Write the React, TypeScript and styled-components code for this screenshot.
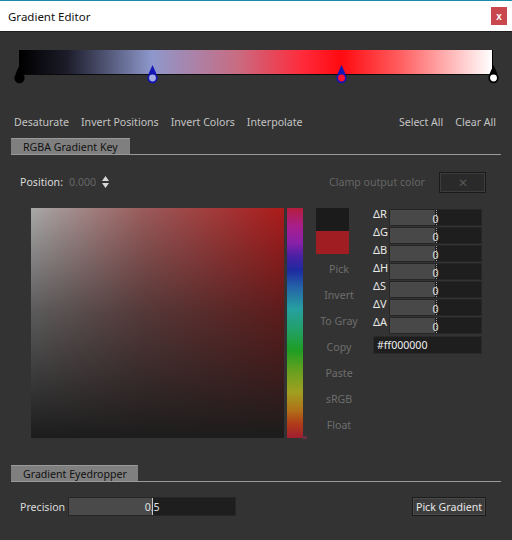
import styled, { createGlobalStyle } from "styled-components";

const GlobalStyle = createGlobalStyle`
  html, body {
    margin: 0;
    padding: 0;
    background: #333333;
  }
  * {
    box-sizing: border-box;
  }
`;

type Stop = { pos: number; color: string; outline: string; tip: string };

const stops: Stop[] = [
  { pos: 0, color: "#000000", outline: "#000000", tip: "#000000" },
  { pos: 28.1, color: "#a4abe0", outline: "#1515b8", tip: "#1515b8" },
  { pos: 68.1, color: "#ff1030", outline: "#1515b8", tip: "#1515b8" },
  { pos: 100, color: "#ffffff", outline: "#000000", tip: "#000000" },
];

const deltas = ["ΔR", "ΔG", "ΔB", "ΔH", "ΔS", "ΔV", "ΔA"];
const actions = ["Pick", "Invert", "To Gray", "Copy", "Paste", "sRGB", "Float"];

const Window = styled.div`
  width: 512px;
  height: 540px;
  background: #333333;
  font-family: "Noto Sans", "Open Sans", sans-serif;
  font-size: 10.6px;
  color: #c8c8c8;
  display: flex;
  flex-direction: column;
  overflow: hidden;
`;

const TitleBar = styled.div`
  height: 32px;
  flex-shrink: 0;
  background: #ffffff;
  border-top: 1px solid #1a8cab;
  border-bottom: 1px solid #1e1e1e;
  display: flex;
  align-items: center;
  justify-content: space-between;
  padding: 0 5px 0 8px;
  color: #111;
  font-size: 11.5px;
`;

const CloseButton = styled.div`
  width: 16px;
  height: 18px;
  background: #c8484e;
  color: #fff;
  font-size: 10px;
  font-weight: bold;
  display: flex;
  align-items: center;
  justify-content: center;
  font-family: "Liberation Sans", sans-serif;
`;

const Body = styled.div`
  flex: 1;
  padding: 0 11px;
  display: flex;
  flex-direction: column;
`;

const GradientArea = styled.div`
  position: relative;
  margin: 18px 8px 0 8px;
  height: 34px;
`;

const GradientBar = styled.div`
  height: 25px;
  border-bottom: 1px solid #0a0a0a;
  border-left: 1px solid #000;
  border-right: 1px solid #000;
  background: linear-gradient(
    to right,
    #000000 0%,
    #1c1c2a 10%,
    #8e98cc 28%,
    #c86c82 46%,
    #ff2a3a 60%,
    #ff0a10 68%,
    #ff5a5c 80%,
    #ffffff 100%
  );
`;

const Marker = styled.svg`
  position: absolute;
  top: 14px;
  width: 13px;
  height: 19px;
  margin-left: -6.5px;
  overflow: visible;
`;

const Toolbar = styled.div`
  margin-top: 30px;
  display: flex;
  justify-content: space-between;
  padding: 0 5px 0 3px;
  height: 16px;
  align-items: center;
`;

const ToolGroup = styled.div`
  display: flex;
  gap: 12px;
`;

const ToolLink = styled.span`
  color: #c4c4c4;
  white-space: nowrap;
`;

const TabHeader = styled.div<{ $top: number }>`
  margin-top: ${(p) => p.$top}px;
  border-bottom: 1px solid #9a9a9a;
  display: flex;
`;

const Tab = styled.div<{ $width: number }>`
  width: ${(p) => p.$width}px;
  height: 16px;
  background: #7f7f7f;
  color: #111;
  padding-left: 12px;
  display: flex;
  align-items: center;
  border-top: 1px solid #9a9a9a;
`;

const PositionRow = styled.div`
  margin-top: 16px;
  height: 22px;
  display: flex;
  align-items: center;
  padding: 0 15px 0 9px;
`;

const Label = styled.span<{ $dim?: boolean }>`
  color: ${(p) => (p.$dim ? "#666666" : "#dcdcdc")};
  white-space: nowrap;
`;

const Spinner = styled.svg`
  margin-left: 6px;
  width: 7px;
  height: 12px;
`;

const Spacer = styled.div`
  flex: 1;
`;

const ClampButton = styled.div`
  margin-left: 14px;
  width: 47px;
  height: 21px;
  background: #2a2a2a;
  border: 1px solid #1a1a1a;
  box-shadow: inset 0 0 0 1px #3c3c3c;
  display: flex;
  align-items: center;
  justify-content: center;
  color: #555;
  font-size: 12px;
`;

const PickerRow = styled.div`
  margin-top: 15px;
  display: flex;
  padding-left: 20px;
`;

const SVSquare = styled.div`
  width: 253px;
  height: 230px;
  background: linear-gradient(
      to bottom,
      rgba(28, 28, 28, 0) 0%,
      rgba(28, 28, 28, 0.55) 45%,
      rgba(28, 28, 28, 1) 100%
    ),
    linear-gradient(to right, #a8a8a8 0%, #9a5a5a 45%, #ac1a1a 100%);
`;

const HueBar = styled.div`
  margin-left: 3px;
  width: 16px;
  height: 230px;
  position: relative;
  background: linear-gradient(
    to bottom,
    #b41e3c 0%,
    #a81e8c 8%,
    #8a20a8 15%,
    #4a20a4 21%,
    #1e2aa0 27%,
    #2460a8 34%,
    #26a0a0 44%,
    #22a060 54%,
    #1e9e22 62%,
    #62a020 70%,
    #a0a020 80%,
    #b07018 88%,
    #b03a1a 94%,
    #a01e30 100%
  );
`;

const HueMark = styled.div`
  position: absolute;
  right: -4px;
  bottom: -1px;
  width: 5px;
  height: 3px;
  background: #6a3040;
`;

const SideColumn = styled.div`
  margin-left: 13px;
  width: 46px;
  display: flex;
  flex-direction: column;
  align-items: flex-start;
`;

const Swatch = styled.div<{ $color: string }>`
  width: 33px;
  height: 23px;
  background: ${(p) => p.$color};
`;

const ActionList = styled.div`
  margin-top: 2px;
  width: 46px;
  display: flex;
  flex-direction: column;
`;

const ActionItem = styled.div`
  height: 26px;
  display: flex;
  align-items: center;
  justify-content: center;
  color: #6e6e6e;
  white-space: nowrap;
`;

const DeltaGrid = styled.div`
  margin-left: 11px;
  display: grid;
  grid-template-columns: 16px 93px;
  grid-auto-rows: 18px;
  align-items: center;
  align-content: start;
`;

const DeltaLabel = styled.span`
  color: #e8e8e8;
  font-size: 11px;
  line-height: 12px;
  align-self: start;
`;

const DeltaField = styled.div`
  height: 17px;
  position: relative;
  background: linear-gradient(to right, #484848 0%, #484848 50%, #1e1e1e 50%);
  border: 1px solid #262626;
  display: flex;
  align-items: center;
  justify-content: center;
  color: #e0e0e0;
  padding-top: 3px;
`;

const DeltaTick = styled.div`
  position: absolute;
  left: 50%;
  top: 0;
  bottom: 0;
  border-left: 1px dotted #a8a8a8;
`;

const HexField = styled.div`
  grid-column: 1 / 3;
  margin-top: 3px;
  height: 18px;
  background: #1e1e1e;
  border: 1px solid #2a2a2a;
  color: #f0f0f0;
  padding-left: 3px;
  display: flex;
  align-items: center;
`;

const PrecisionRow = styled.div`
  margin-top: 15px;
  height: 19px;
  display: flex;
  align-items: center;
  padding: 0 15px 0 9px;
`;

const Slider = styled.div`
  margin-left: 3px;
  width: 168px;
  height: 19px;
  position: relative;
  background: linear-gradient(to right, #4a4a4a 0%, #4a4a4a 50%, #1e1e1e 50%);
  border: 1px solid #262626;
  display: flex;
  align-items: center;
  justify-content: center;
  color: #e0e0e0;
`;

const SliderTick = styled.div`
  position: absolute;
  left: 50%;
  top: 0;
  bottom: 0;
  border-left: 1px solid #c8c8c8;
`;

const PickButton = styled.div`
  width: 74px;
  height: 19px;
  background: #3c3c3c;
  border: 1px solid #1c1c1c;
  box-shadow: inset 0 0 0 1px #4a4a4a;
  color: #e8e8e8;
  display: flex;
  align-items: center;
  justify-content: center;
  white-space: nowrap;
`;

const MarkerIcon = ({ stop }: { stop: Stop }) => (
  <Marker style={{ left: `${stop.pos}%` }} viewBox="0 0 13 19">
    <path d="M6.5 1 L10.5 10 L2.5 10 Z" fill={stop.tip} />
    <circle cx="6.5" cy="14" r="4.3" fill={stop.color} stroke={stop.outline} strokeWidth="1.7" />
  </Marker>
);

export default function App() {
  return (
    <>
      <GlobalStyle />
      <Window>
        <TitleBar>
          <span>Gradient Editor</span>
          <CloseButton>x</CloseButton>
        </TitleBar>
        <Body>
          <GradientArea>
            <GradientBar />
            {stops.map((s, i) => (
              <MarkerIcon key={i} stop={s} />
            ))}
          </GradientArea>

          <Toolbar>
            <ToolGroup>
              <ToolLink>Desaturate</ToolLink>
              <ToolLink>Invert Positions</ToolLink>
              <ToolLink>Invert Colors</ToolLink>
              <ToolLink>Interpolate</ToolLink>
            </ToolGroup>
            <ToolGroup>
              <ToolLink>Select All</ToolLink>
              <ToolLink>Clear All</ToolLink>
            </ToolGroup>
          </Toolbar>

          <TabHeader $top={8}>
            <Tab $width={119}>RGBA Gradient Key</Tab>
          </TabHeader>

          <PositionRow>
            <Label>Position:</Label>
            <Label $dim style={{ marginLeft: 6 }}>
              0.000
            </Label>
            <Spinner viewBox="0 0 7 12">
              <path d="M3.5 0 L7 5 L0 5 Z" fill="#d8d8d8" />
              <path d="M3.5 12 L7 7 L0 7 Z" fill="#d8d8d8" />
            </Spinner>
            <Spacer />
            <Label $dim>Clamp output color</Label>
            <ClampButton>✕</ClampButton>
          </PositionRow>

          <PickerRow>
            <SVSquare />
            <HueBar>
              <HueMark />
            </HueBar>
            <SideColumn>
              <Swatch $color="#1b1b1b" />
              <Swatch $color="#a01e22" />
              <ActionList>
                {actions.map((a) => (
                  <ActionItem key={a}>{a}</ActionItem>
                ))}
              </ActionList>
            </SideColumn>
            <DeltaGrid>
              {deltas.map((d) => [
                <DeltaLabel key={d}>{d}</DeltaLabel>,
                <DeltaField key={d + "f"}>
                  <DeltaTick />0
                </DeltaField>,
              ])}
              <HexField>#ff000000</HexField>
            </DeltaGrid>
          </PickerRow>

          <TabHeader $top={27}>
            <Tab $width={127}>Gradient Eyedropper</Tab>
          </TabHeader>

          <PrecisionRow>
            <Label>Precision</Label>
            <Slider>
              <SliderTick />
              0.5
            </Slider>
            <Spacer />
            <PickButton>Pick Gradient</PickButton>
          </PrecisionRow>
        </Body>
      </Window>
    </>
  );
}
